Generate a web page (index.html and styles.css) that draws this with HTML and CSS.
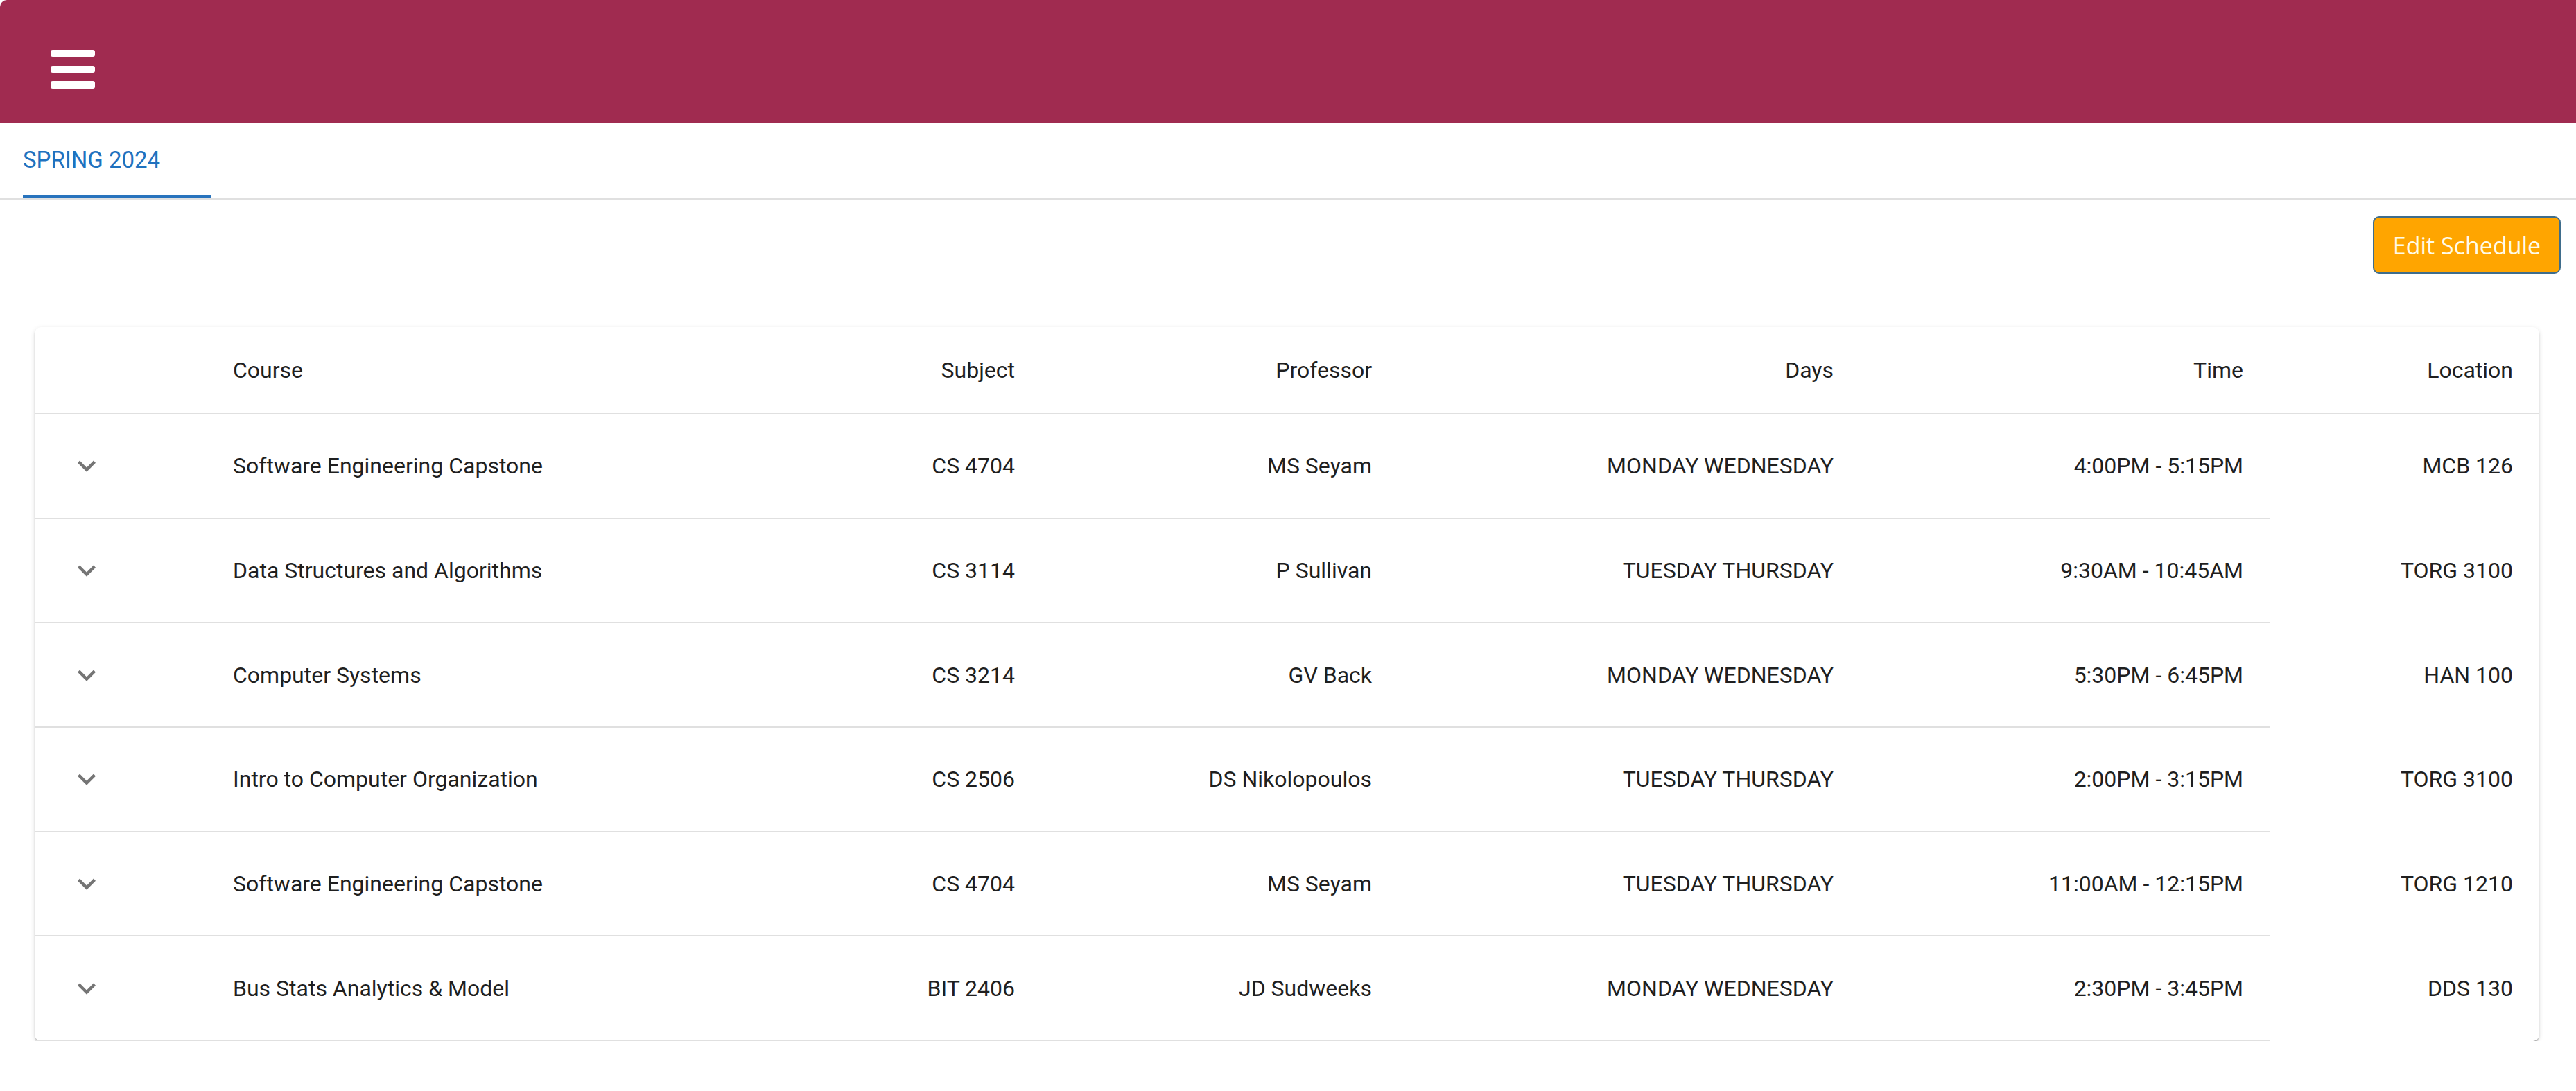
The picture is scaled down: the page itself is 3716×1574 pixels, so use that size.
FILE: index.html
```html
<!DOCTYPE html>
<html lang="en">
<head>
<meta charset="utf-8">
<title>Schedule</title>
<link rel="stylesheet" href="styles.css">
</head>
<body>
<header class="appbar">
  <button class="menu-btn" aria-label="menu">
    <svg width="64" height="56" viewBox="0 0 64 56"><rect x="0" y="0" width="64" height="10" rx="3" fill="#fff"/><rect x="0" y="23" width="64" height="10" rx="3" fill="#fff"/><rect x="0" y="45" width="64" height="11" rx="3" fill="#fff"/></svg>
  </button>
</header>
<nav class="tabs">
  <div class="tab active">SPRING 2024</div>
</nav>
<div class="toolbar">
  <button class="edit-btn">Edit Schedule</button>
</div>
<section class="card">
  <div class="row head">
    <div class="cell"></div>
    <div class="cell left">Course</div>
    <div class="cell">Subject</div>
    <div class="cell">Professor</div>
    <div class="cell">Days</div>
    <div class="cell">Time</div>
    <div class="cell">Location</div>
  </div>
  <div class="row body">
    <div class="cell expand"><span class="icon-btn"><svg viewBox="0 0 24 24"><path d="M16.59 8.59 12 13.17 7.41 8.59 6 10l6 6 6-6z"/></svg></span></div>
    <div class="cell left">Software Engineering Capstone</div>
    <div class="cell">CS 4704</div>
    <div class="cell">MS Seyam</div>
    <div class="cell">MONDAY WEDNESDAY</div>
    <div class="cell">4:00PM - 5:15PM</div>
    <div class="cell loc">MCB 126</div>
  </div>
  <div class="row body">
    <div class="cell expand"><span class="icon-btn"><svg viewBox="0 0 24 24"><path d="M16.59 8.59 12 13.17 7.41 8.59 6 10l6 6 6-6z"/></svg></span></div>
    <div class="cell left">Data Structures and Algorithms</div>
    <div class="cell">CS 3114</div>
    <div class="cell">P Sullivan</div>
    <div class="cell">TUESDAY THURSDAY</div>
    <div class="cell">9:30AM - 10:45AM</div>
    <div class="cell loc">TORG 3100</div>
  </div>
  <div class="row body">
    <div class="cell expand"><span class="icon-btn"><svg viewBox="0 0 24 24"><path d="M16.59 8.59 12 13.17 7.41 8.59 6 10l6 6 6-6z"/></svg></span></div>
    <div class="cell left">Computer Systems</div>
    <div class="cell">CS 3214</div>
    <div class="cell">GV Back</div>
    <div class="cell">MONDAY WEDNESDAY</div>
    <div class="cell">5:30PM - 6:45PM</div>
    <div class="cell loc">HAN 100</div>
  </div>
  <div class="row body">
    <div class="cell expand"><span class="icon-btn"><svg viewBox="0 0 24 24"><path d="M16.59 8.59 12 13.17 7.41 8.59 6 10l6 6 6-6z"/></svg></span></div>
    <div class="cell left">Intro to Computer Organization</div>
    <div class="cell">CS 2506</div>
    <div class="cell">DS Nikolopoulos</div>
    <div class="cell">TUESDAY THURSDAY</div>
    <div class="cell">2:00PM - 3:15PM</div>
    <div class="cell loc">TORG 3100</div>
  </div>
  <div class="row body">
    <div class="cell expand"><span class="icon-btn"><svg viewBox="0 0 24 24"><path d="M16.59 8.59 12 13.17 7.41 8.59 6 10l6 6 6-6z"/></svg></span></div>
    <div class="cell left">Software Engineering Capstone</div>
    <div class="cell">CS 4704</div>
    <div class="cell">MS Seyam</div>
    <div class="cell">TUESDAY THURSDAY</div>
    <div class="cell">11:00AM - 12:15PM</div>
    <div class="cell loc">TORG 1210</div>
  </div>
  <div class="row body">
    <div class="cell expand"><span class="icon-btn"><svg viewBox="0 0 24 24"><path d="M16.59 8.59 12 13.17 7.41 8.59 6 10l6 6 6-6z"/></svg></span></div>
    <div class="cell left">Bus Stats Analytics &amp; Model</div>
    <div class="cell">BIT 2406</div>
    <div class="cell">JD Sudweeks</div>
    <div class="cell">MONDAY WEDNESDAY</div>
    <div class="cell">2:30PM - 3:45PM</div>
    <div class="cell loc">DDS 130</div>
  </div>
</section>
</body>
</html>
```

FILE: styles.css
```css
* { box-sizing: border-box; }
html, body { margin: 0; padding: 0; background: #fff; }
body { font-family: Roboto, "Liberation Sans", sans-serif; color: rgba(0,0,0,0.87); }

.appbar {
  height: 178px;
  background: #a02b50;
  border-top-left-radius: 10px;
  display: flex;
  align-items: flex-start;
  padding: 72px 0 0 73px;
}
.menu-btn {
  border: 0; padding: 0; margin: 0; background: transparent;
  width: 64px; height: 56px; display: block;
}
.menu-btn svg { display: block; }

.tabs {
  height: 110px;
  border-bottom: 2px solid #e0e0e0;
  display: flex;
  align-items: flex-end;
  padding-left: 33px;
}
.tab {
  width: 271px;
  height: 108px;
  font-size: 33px;
  line-height: 33px;
  color: #1f72bf;
  padding-top: 36px;
  border-bottom: 5px solid #2873bd;
}

.toolbar {
  display: flex;
  justify-content: flex-end;
  padding: 24px 22px 0 0;
}
.edit-btn {
  width: 271px;
  height: 83px;
  background: #ffa500;
  border: 2px solid #3f6d8c;
  border-radius: 9px;
  color: #fffbe8;
  font-family: "Open Sans", "Liberation Sans", sans-serif;
  font-size: 34px;
  padding: 0;
}

.card {
  margin: 77px 53px 0 50px;
  background: #fff;
  border-radius: 9px;
  box-shadow: 0 5px 2px -2px rgba(0,0,0,0.22), 0 2px 2px 0 rgba(0,0,0,0.14), 0 2px 7px 0 rgba(0,0,0,0.12);
}
.row {
  display: grid;
  grid-template-columns: 248px 804px 400px 515px 666px 591px 389px;
}
.cell {
  display: flex;
  align-items: center;
  justify-content: flex-end;
  padding: 0 38px;
  font-size: 32px;
  line-height: 46px;
  white-space: nowrap;
  color: #1f1f1f;
}
.cell.left { justify-content: flex-start; }
.head .cell { height: 126px; border-bottom: 2px solid #e0e0e0; }
.body .cell { height: 150.67px; border-bottom: 2px solid #e0e0e0; }
.body .cell.loc { border-bottom-color: transparent; }
.cell.expand { justify-content: flex-start; }
.icon-btn {
  width: 74px; height: 74px;
  display: flex; align-items: center; justify-content: center;
}
.icon-btn svg { width: 52px; height: 52px; fill: rgba(0,0,0,0.54); display: block; }
```
